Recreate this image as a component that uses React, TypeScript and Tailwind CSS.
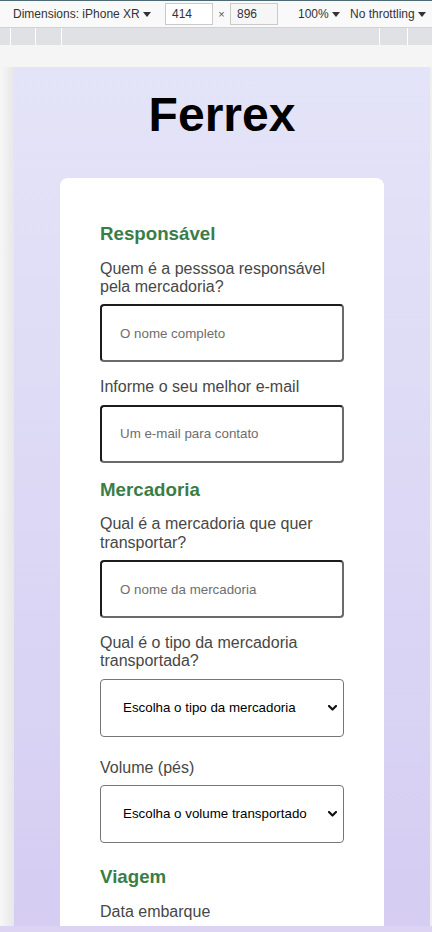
import React from "react";

const headingCls = "text-[18.72px] font-bold leading-[21.5px] text-[#3a7d48]";
const labelCls = "block text-[16px] leading-[18.4px] text-[#474747]";
const inputCls =
  "mt-2 block h-[58px] w-full rounded-[4px] border-2 border-t-[#1c1c1c] border-l-[#1c1c1c] border-b-[#6a6a6a] border-r-[#6a6a6a] bg-white px-[18px] text-[13.33px] text-black placeholder:text-[#6e6e6e] outline-none";

const Caret: React.FC = () => (
  <svg width="8" height="5" viewBox="0 0 8 5" className="ml-[3px] inline-block">
    <polygon points="0,0 8,0 4,5" fill="#333" />
  </svg>
);

const Chevron: React.FC = () => (
  <svg
    width="9"
    height="6"
    viewBox="0 0 9 6"
    className="pointer-events-none absolute right-[7px] top-1/2 -translate-y-1/2"
  >
    <path d="M1 1 L4.5 4.5 L8 1" fill="none" stroke="#111" strokeWidth="2.2" strokeLinecap="round" strokeLinejoin="round" />
  </svg>
);

type SelectProps = { placeholder: string; className?: string };

const FieldSelect: React.FC<SelectProps> = ({ placeholder, className }) => (
  <div className={`relative mt-2 ${className ?? ""}`}>
    <select
      defaultValue=""
      className="block h-[58px] w-full appearance-none rounded-[4px] border border-[#767676] bg-white pl-[22px] pr-6 text-[13.33px] text-black outline-none"
    >
      <option value="" disabled>
        {placeholder}
      </option>
    </select>
    <Chevron />
  </div>
);

const DevToolbar: React.FC = () => (
  <>
    <div className="flex h-[28px] items-center border-t border-t-[#4b6a74] border-b border-b-[#cfd1d5] bg-[#f9f9fa] text-[12px] text-[#333]">
      <span className="flex w-[165px] items-center pl-[13px]">
        Dimensions: iPhone XR
        <Caret />
      </span>
      <span className="flex h-[22px] w-[48px] items-center border border-[#cacaca] bg-white pl-[6px]">414</span>
      <span className="w-[17px] text-center text-[11px] text-[#555]">×</span>
      <span className="flex h-[22px] w-[48px] items-center border border-[#cacaca] bg-[#f6f6f6] pl-[6px]">896</span>
      <span className="ml-[20px] flex w-[52px] items-center">
        100%
        <Caret />
      </span>
      <span className="flex items-center">
        No throttling
        <Caret />
      </span>
    </div>
    <div className="flex h-[17px] bg-[#dfe1e5]">
      <div className="w-[11px] border-r border-white" />
      <div className="w-[25px] border-r border-white" />
      <div className="w-[26px] border-r border-white" />
      <div className="w-[318px] border-r border-white" />
      <div className="w-[28px] border-r border-white" />
      <div className="flex-1" />
    </div>
  </>
);

export default function App() {
  return (
    <div className="flex h-[932px] w-[432px] flex-col overflow-hidden bg-[#f5f5f5] font-['Liberation_Sans',Arial,sans-serif]">
      <DevToolbar />

      <div className="flex min-h-0 flex-1 flex-col pt-[22px]">
        <div className="flex min-h-0 flex-1">
          <div className="w-[14px] bg-linear-to-r from-[#f7f7f7] to-[#e7e7e7]" />

          <main className="w-[416px] overflow-hidden bg-linear-to-b from-[#e4e4f8] to-[#d5cdf2] pt-[20px]">
            <h1 className="text-center text-[48px] font-bold leading-[55px] text-black">Ferrex</h1>

            <form className="mx-auto mt-[36px] w-[324px] rounded-[8px] bg-white px-[40px] pt-[45px] pb-10">
              <h3 className={headingCls}>Responsável</h3>
              <label className={`${labelCls} mt-[15px]`}>Quem é a pesssoa responsável pela mercadoria?</label>
              <input type="text" placeholder="O nome completo" className={inputCls} />

              <label className={`${labelCls} mt-4`}>Informe o seu melhor e-mail</label>
              <input type="email" placeholder="Um e-mail para contato" className={inputCls} />

              <h3 className={`${headingCls} mt-4`}>Mercadoria</h3>
              <label className={`${labelCls} mt-[15px]`}>Qual é a mercadoria que quer transportar?</label>
              <input type="text" placeholder="O nome da mercadoria" className={inputCls} />

              <label className={`${labelCls} mt-4`}>Qual é o tipo da mercadoria transportada?</label>
              <FieldSelect placeholder="Escolha o tipo da mercadoria" />

              <label className={`${labelCls} mt-[22px]`}>Volume (pés)</label>
              <FieldSelect placeholder="Escolha o volume transportado" />

              <h3 className={`${headingCls} mt-[23px]`}>Viagem</h3>
              <label className={`${labelCls} mt-[15px]`}>Data embarque</label>
              <input type="date" className={inputCls} />
            </form>
          </main>

          <div className="flex-1 bg-[#efefef]" />
        </div>
        <div className="h-[6px] bg-[#ddd3f3]" />
      </div>
    </div>
  );
}
